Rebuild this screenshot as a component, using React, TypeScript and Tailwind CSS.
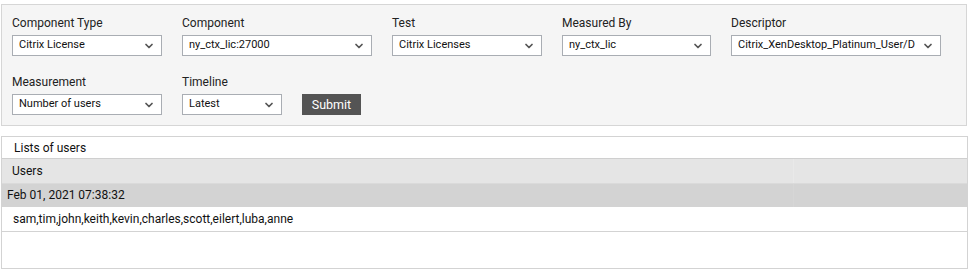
import { ChevronDown } from "lucide-react";

const SelectBox = ({ value, width }: { value: string; width: string }) => (
  <div
    className={`${width} h-[21px] bg-white border border-[#a9adb3] flex items-center justify-between pl-[6px] pr-[6px] text-[11px] text-[#111]`}
  >
    <span className="whitespace-nowrap">{value}</span>
    <ChevronDown size={12} strokeWidth={3.5} className="text-[#555] shrink-0 ml-[4px]" />
  </div>
);

const Field = ({ label, value, width }: { label: string; value: string; width: string }) => (
  <div className="flex flex-col">
    <div className="h-[18px] leading-[18px] text-[12px] text-[#222] mb-[3px]">{label}</div>
    <SelectBox value={value} width={width} />
  </div>
);

export default function App() {
  return (
    <div className="w-[969px] h-[273px] bg-white font-['Roboto',sans-serif] overflow-hidden">
      {/* Filter panel */}
      <div className="mt-[4px] ml-[1px] w-[966px] h-[122px] border border-[#d6d6d6] bg-[#f5f5f5] pl-[10px] pt-[9px]">
        <div className="flex gap-[20px]">
          <Field label="Component Type" value="Citrix License" width="w-[150px]" />
          <Field label="Component" value="ny_ctx_lic:27000" width="w-[190px]" />
          <Field label="Test" value="Citrix Licenses" width="w-[150px]" />
          <Field label="Measured By" value="ny_ctx_lic" width="w-[149px]" />
          <Field label="Descriptor" value="Citrix_XenDesktop_Platinum_User/D" width="w-[210px]" />
        </div>
        <div className="flex gap-[20px] items-end mt-[17px]">
          <Field label="Measurement" value="Number of users" width="w-[150px]" />
          <Field label="Timeline" value="Latest" width="w-[100px]" />
          <button className="h-[21px] w-[59px] bg-[#545454] text-white text-[12.5px] leading-[21px]">
            Submit
          </button>
        </div>
      </div>

      {/* Users table */}
      <div className="mt-[10px] ml-[1px] w-[967px] border border-[#d3d3d3] text-[12px] text-[#111]">
        <div className="h-[22px] leading-[22px] pl-[12px] border-b border-[#cfcfcf]">Lists of users</div>
        <div className="flex h-[25px] leading-[25px] bg-[#e5e5e5] border-b border-[#dadada]">
          <div className="w-[791px] pl-[10px]">Users</div>
          <div className="flex-1 border-l border-[#e9e9e9]" />
        </div>
        <div className="flex h-[23px] leading-[23px] bg-[#d3d3d3]">
          <div className="w-[791px] pl-[5px]">Feb 01, 2021 07:38:32</div>
          <div className="flex-1 border-l border-[#d6d6d6]" />
        </div>
        <div className="h-[25px] leading-[25px] pl-[11px] border-b border-[#d3d3d3]">
          sam,tim,john,keith,kevin,charles,scott,eilert,luba,anne
        </div>
        <div className="h-[36px]" />
      </div>
    </div>
  );
}
